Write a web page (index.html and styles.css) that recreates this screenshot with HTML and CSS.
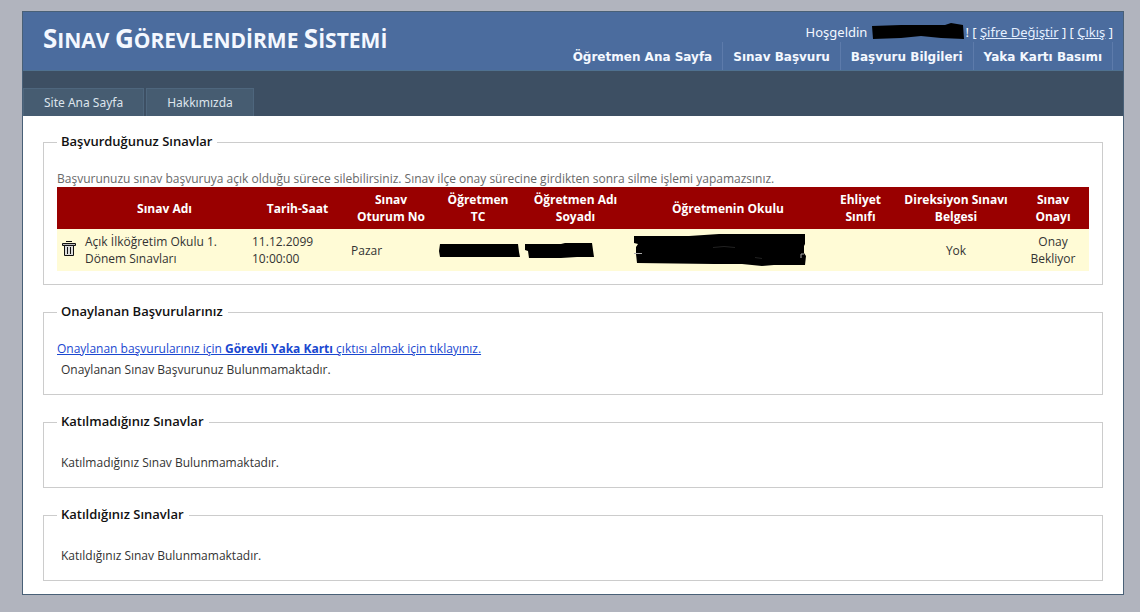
FILE: index.html
```html
<!DOCTYPE html>
<html lang="tr">
<head>
<meta charset="utf-8">
<title>Sınav Görevlendirme Sistemi</title>
<link rel="stylesheet" href="styles.css">
</head>
<body>
<div class="page">
  <header class="header">
    <h1 class="title"><span class="cap">S</span>INAV <span class="cap">G</span>ÖREVLENDİRME <span class="cap">S</span>İSTEMİ</h1>
    <div class="account">
      <div class="login">
        <span>Hoşgeldin</span>
        <svg class="mask" width="94" height="18" viewBox="0 0 94 18" aria-hidden="true"><path d="M1 3 30 2 60 2 74 2 80 0 92 2 93 16 70 15 50 13 30 15 2 16Z"/></svg>
        <span>! [ <a href="#">Şifre Değiştir</a> ] [ <a href="#">Çıkış</a> ]</span>
      </div>
      <nav class="menu">
        <a href="#">Öğretmen Ana Sayfa</a>
        <a href="#">Sınav Başvuru</a>
        <a href="#">Başvuru Bilgileri</a>
        <a href="#">Yaka Kartı Basımı</a>
      </nav>
    </div>
  </header>
  <nav class="tabs">
    <a href="#">Site Ana Sayfa</a>
    <a href="#">Hakkımızda</a>
  </nav>
  <main class="main">
    <fieldset class="group">
      <legend>Başvurduğunuz Sınavlar</legend>
      <p class="note">Başvurunuzu sınav başvuruya açık olduğu sürece silebilirsiniz. Sınav ilçe onay sürecine girdikten sonra silme işlemi yapamazsınız.</p>
      <table class="exams">
        <colgroup>
          <col class="c-icon"><col class="c-name"><col class="c-date"><col class="c-session"><col class="c-id"><col class="c-person"><col class="c-school"><col class="c-class"><col class="c-cert"><col class="c-status">
        </colgroup>
        <thead>
          <tr>
            <th></th><th>Sınav Adı</th><th>Tarih-Saat</th><th>Sınav Oturum No</th><th>Öğretmen TC</th><th>Öğretmen Adı Soyadı</th><th>Öğretmenin Okulu</th><th>Ehliyet Sınıfı</th><th>Direksiyon Sınavı Belgesi</th><th>Sınav Onayı</th>
          </tr>
        </thead>
        <tbody>
          <tr>
            <td>
              <button class="delete" type="button" aria-label="Sil">
                <svg width="16" height="18" viewBox="0 0 16 18" aria-hidden="true"><path d="M5 .5h6M1.500 2.500h13v2h-13z" fill="#bbb" stroke="#111"/><path d="M3.500 4.500h9v10h-9z" fill="#ddd" stroke="#111"/><path d="M6.500 6v7M9.500 6v7" stroke="#111"/></svg>
              </button>
            </td>
            <td>Açık İlköğretim Okulu 1. Dönem Sınavları</td>
            <td>11.12.2099 10:00:00</td>
            <td>Pazar</td>
            <td><svg class="mask" width="81" height="15" viewBox="0 0 81 15" aria-hidden="true"><path d="M1 1 79 1 80 9 81 14 1 14 0 8Z"/></svg></td>
            <td><svg class="mask" width="69" height="17" viewBox="0 0 69 17" aria-hidden="true"><path d="M0 2 36 2 40 1 67 1 69 15 52 15 36 16 4 16 3 9 0 8Z"/></svg></td>
            <td><svg class="mask" width="172" height="32" viewBox="0 0 172 32" aria-hidden="true"><path d="M0 2 55 2 85 0 171 0 171 10 170 12 170 19 172 22 171 31 140 31 128 32 108 30 80 30 3 29 2 20 0 20 2 19 2 13 4 10 0 9Z"/><path d="M79 13.500 90 12.500 101 13.500M121 23.500 128 24.500" fill="none" stroke="#222"/><path d="M167 24V20H170M0 19.500H8" fill="none" stroke="#aaa"/></svg></td>
            <td></td>
            <td class="center">Yok</td>
            <td class="center">Onay Bekliyor</td>
          </tr>
        </tbody>
      </table>
    </fieldset>
    <fieldset class="group brief">
      <legend>Onaylanan Başvurularınız</legend>
      <a class="card-link" href="#">Onaylanan başvurularınız için <b>Görevli Yaka Kartı</b> çıktısı almak için tıklayınız.</a>
      <p class="empty">Onaylanan Sınav Başvurunuz Bulunmamaktadır.</p>
    </fieldset>
    <fieldset class="group brief">
      <legend>Katılmadığınız Sınavlar</legend>
      <p class="empty">Katılmadığınız Sınav Bulunmamaktadır.</p>
    </fieldset>
    <fieldset class="group brief">
      <legend>Katıldığınız Sınavlar</legend>
      <p class="empty">Katıldığınız Sınav Bulunmamaktadır.</p>
    </fieldset>
  </main>
</div>
</body>
</html>
```
FILE: styles.css
```css
* { box-sizing: border-box; }
body {
  margin: 0;
  padding: 11px 16px 16px 22px;
  background: #b1b4be;
  color: #333;
  font: 12px/17px "Open Sans", "Noto Sans", sans-serif;
}
p { margin: 0; }
.page { background: #fff; border: 1px solid #496077; }
.header {
  display: flex;
  justify-content: space-between;
  height: 59px;
  padding-left: 20px;
  padding-right: 10px;
  background: #4b6c9e;
  border-bottom: 1px solid #4f7190;
  color: #f4f8ff;
}
.title { margin: 0; padding-top: 10px; font-size: 21px; line-height: 32px; font-weight: 700; }
.cap { font-size: 26px; }
.account { display: flex; flex-direction: column; justify-content: space-between; align-items: flex-end; }
.login { display: flex; align-items: center; padding-top: 10px; font-family: "Noto Sans", "Open Sans", sans-serif; font-size: 13px; line-height: 20px; white-space: pre; }
.login .mask { margin-left: 4px; }
.login a { color: #e4efff; }
.menu { display: flex; }
.menu a {
  padding: 5px 10px 3px;
  border-right: 1px solid #5d7bab;
  color: #f4f8ff;
  font: bold 12px/20px "DejaVu Sans", Verdana, sans-serif;
  text-decoration: none;
}
.tabs { display: flex; align-items: flex-end; gap: 2px; padding-top: 17px; background: #3d4f63; }
.tabs a {
  padding: 4px 20px 3px;
  border: 1px solid #4e667d;
  border-bottom: 0;
  background: #465c71;
  color: #dde4ec;
  font-family: "Noto Sans", "Open Sans", sans-serif;
  line-height: 20px;
  text-decoration: none;
}
.main { display: grid; gap: 18px; padding: 17px 20px 13px; }
.group { min-width: 0; margin: 0; padding: 20px 13px 13px; border: 1px solid #ccc; }
.group legend { padding: 0 5px 2px 4px; color: #111; font-size: 13px; font-weight: 600; line-height: 16px; }
.brief { padding-top: 19px; }
.note { color: #696969; line-height: 16px; }
.exams { width: 100%; table-layout: fixed; border-collapse: collapse; }
.exams th { height: 42px; padding: 4px; background: #900; color: #fff; font-weight: 700; }
.exams td { height: 42px; padding: 4px; background: #fffbd6; text-align: left; }
.exams td.center { text-align: center; }
.c-icon { width: 24px; }
.c-name { width: 167px; }
.c-date { width: 99px; }
.c-session { width: 88px; }
.c-id { width: 86px; }
.c-person { width: 109px; }
.c-school { width: 196px; }
.c-class { width: 69px; }
.c-cert { width: 122px; }
.c-status { width: 72px; }
.mask { display: block; flex: none; overflow: visible; }
.delete { display: block; padding: 0; border: 0; background: none; cursor: pointer; }
.delete svg { display: block; }
.card-link { display: block; color: #1a48d0; }
.empty { padding: 4px 4px 3px; }
```
